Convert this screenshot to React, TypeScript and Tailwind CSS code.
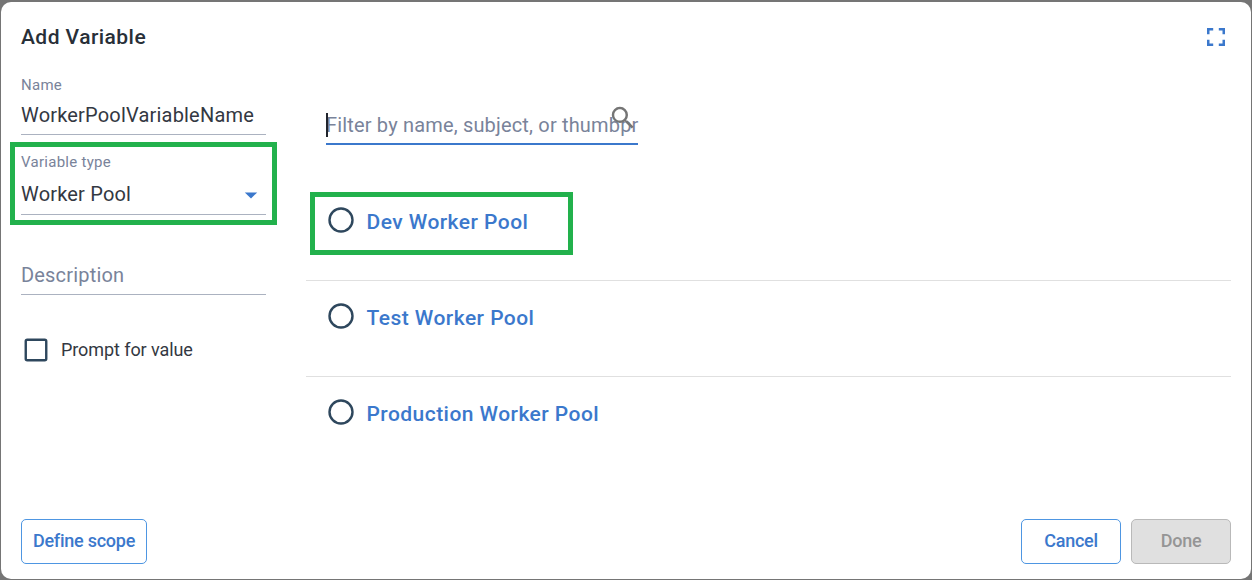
import React from "react";

function Field({ label, value, className, children }: { label: string; value: string; className: string; children?: React.ReactNode }) {
  return (
    <div className={`flex w-[245px] flex-col border-b border-[#abb2c0] ${className}`}>
      <span className="h-[18px] text-[15px] leading-[18px] tracking-[0.28px] text-[#79839a]">{label}</span>
      <div className="flex grow items-center justify-between pt-0.5">
        <span className="text-[20px] leading-6 tracking-[0.19px] text-[#333842]">{value}</span>
        {children}
      </div>
    </div>
  );
}

function PoolRow({ name, last }: { name: string; last?: boolean }) {
  return (
    <label className={`flex h-24 items-start pl-[22px] ${last ? "" : "border-b border-[#e0e0e0]"}`}>
      <svg className="mt-[22px] size-[26px] shrink-0" viewBox="0 0 26 26" fill="none">
        <circle cx="13" cy="13" r="11.5" stroke="#2e475d" strokeWidth="2.4" />
      </svg>
      <span className="ml-[12.5px] mt-[25px] text-[21px] font-medium leading-6 tracking-[0.45px] text-[#3b78cc]">{name}</span>
    </label>
  );
}

export default function App() {
  return (
    <div className="h-[580px] w-[1252px] bg-[#757575] px-px pb-px pt-0.5 font-['Roboto',sans-serif]">
      <div className="relative flex h-[577px] flex-col rounded-[10px] bg-white px-5">
        <header className="flex h-[72px] items-start justify-between">
          <h1 className="mt-[23px] text-[21px] font-medium leading-6 tracking-[0.45px] text-[#282f38]">Add Variable</h1>
          <svg className="mr-1.5 mt-[26px] size-[18px]" viewBox="0 0 18 18" fill="none" stroke="#3b78cc" strokeWidth="2.5">
            <path d="M1.25 6.2V1.25H6.2M11.8 1.25H16.75V6.2M16.75 11.8V16.75H11.8M6.2 16.75H1.25V11.8" />
          </svg>
        </header>
        <main className="flex grow items-start">
          <section className="flex w-[285px] flex-col">
            <Field label="Name" value="WorkerPoolVariableName" className="mt-0.5 h-[59px]" />
            <Field label="Variable type" value="Worker Pool" className="mt-[18px] h-[62px]">
              <svg className="mr-2 mt-1 h-[7px] w-[14px]" viewBox="0 0 14 7">
                <path d="M.8 .4H13.2L7 6.6Z" fill="#3b78cc" />
              </svg>
            </Field>
            <div className="mt-[45px] h-[35px] w-[245px] border-b border-[#abb2c0] text-[20px] leading-[30px] tracking-[0.19px] text-[#79839a]">Description</div>
            <label className="mt-[43px] flex h-6 items-center pl-1">
              <svg className="-ml-px -mt-px size-6" viewBox="0 0 24 24" fill="none">
                <rect x="1.75" y="1.75" width="20.5" height="20.5" rx="1.5" stroke="#2e475d" strokeWidth="2.4" />
              </svg>
              <span className="ml-[13px] text-[18px] leading-6 tracking-[-0.08px] text-[#333842]">Prompt for value</span>
            </label>
          </section>
          <section className="flex grow flex-col">
            <div className="relative ml-5 mt-[38px] h-[33px] w-[312px] border-b-2 border-[#3b78cc]">
              <div className="whitespace-nowrap text-[20px] leading-[26px] tracking-[0.17px] text-[#79839a]">Filter by name, subject, or thumbpr</div>
              <span className="absolute left-0 top-[1px] h-6 w-0.5 bg-[#20242c]" />
              <svg className="absolute left-[282px] top-[-9px] size-[30px]" viewBox="0 0 24 24" fill="#757575">
                <path d="M15.5 14h-.79l-.28-.27A6.471 6.471 0 0 0 16 9.5 6.5 6.5 0 1 0 9.5 16c1.61 0 3.09-.59 4.23-1.57l.27.28v.79l5 4.99L20.49 19l-4.99-5zm-6 0C7.01 14 5 11.99 5 9.5S7.01 5 9.5 5 14 7.01 14 9.5 11.99 14 9.5 14z" />
              </svg>
            </div>
            <div className="mt-10 flex flex-col">
              <PoolRow name="Dev Worker Pool" />
              <PoolRow name="Test Worker Pool" />
              <PoolRow name="Production Worker Pool" last />
            </div>
          </section>
        </main>
        <footer className="flex h-[60px] shrink-0 items-start justify-between text-[18px] font-medium tracking-[-0.25px]">
          <button className="h-[45px] w-[126px] rounded-[5px] border border-[#4e96e2] pb-0.5 text-[#3b78cc]">Define scope</button>
          <div className="flex gap-2.5">
            <button className="h-[45px] w-[100px] rounded-[5px] border border-[#4e96e2] pb-0.5 text-[#3b78cc]">Cancel</button>
            <button className="h-[45px] w-[100px] rounded-[5px] border border-[#b9b9b9] bg-[#e0e0e0] pb-0.5 text-[#959595]">Done</button>
          </div>
        </footer>
        <div className="absolute left-[9px] top-[140px] h-[83px] w-[267px] border-[5px] border-[#22b14c]" />
        <div className="absolute left-[309px] top-[190px] h-[63px] w-[263px] border-[5px] border-[#22b14c]" />
      </div>
    </div>
  );
}
